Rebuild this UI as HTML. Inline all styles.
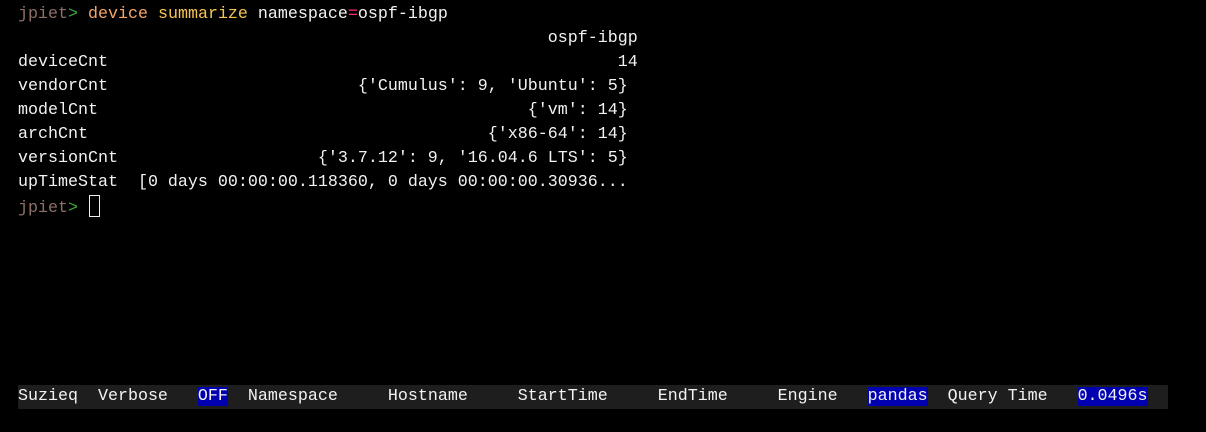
<!DOCTYPE html>
<html><head><style>
html,body{margin:0;padding:0;background:#000;width:1206px;height:432px;overflow:hidden}
pre{margin:0;position:absolute;left:18px;top:3px;font-family:"Liberation Mono",monospace;font-size:16.67px;line-height:24px;color:#f2f2f2}
.u{color:#8f7068}.g{color:#3fa83f}.o{color:#f4a66a}.y{color:#f6c453}.p{color:#ff2d78}
.cur{display:inline-block;width:9px;height:20px;border:1px solid #eee;vertical-align:-5px;margin-left:1px}
#bar{position:absolute;left:18px;top:385px;width:1150px;height:24px;background:#1e1e1e}
#bar pre{position:absolute;left:0;top:0;color:#f2f2f2}
.b{background:#0000b0}
</style></head><body>
<pre><span class="u">jpiet</span><span class="g">&gt;</span> <span class="o">device</span> <span class="y">summarize</span> namespace<span class="p">=</span>ospf-ibgp
                                                     ospf-ibgp
deviceCnt                                                   14
vendorCnt                         {'Cumulus': 9, 'Ubuntu': 5}
modelCnt                                           {'vm': 14}
archCnt                                        {'x86-64': 14}
versionCnt                    {'3.7.12': 9, '16.04.6 LTS': 5}
upTimeStat  [0 days 00:00:00.118360, 0 days 00:00:00.30936...
<span class="u">jpiet</span><span class="g">&gt;</span> <span class="cur"></span></pre>
<div id="bar"><pre>Suzieq  Verbose   <span class="b">OFF</span>  Namespace     Hostname     StartTime     EndTime     Engine   <span class="b">pandas</span>  Query Time   <span class="b">0.0496s</span></pre></div>
</body></html>
